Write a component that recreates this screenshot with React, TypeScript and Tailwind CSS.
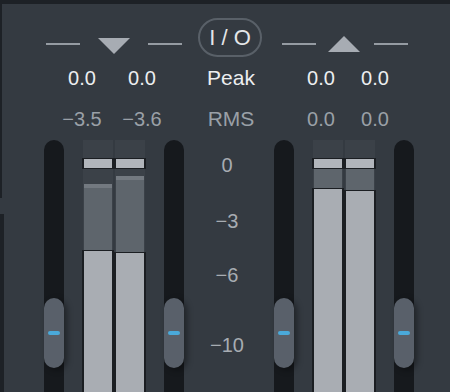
import React from "react";

interface Channel {
  rmsTop: number;
  levelTop: number;
  highlight: boolean;
}

const leftChannels: Channel[] = [
  { rmsTop: 44, levelTop: 110, highlight: true },
  { rmsTop: 36, levelTop: 112, highlight: true },
];

const rightChannels: Channel[] = [
  { rmsTop: 29, levelTop: 48, highlight: false },
  { rmsTop: 29, levelTop: 50, highlight: false },
];

function Track() {
  return (
    <div className="w-[20px] h-full rounded-t-full bg-[#16191d] flex flex-col">
      <div className="mt-[158px] h-[70px] w-[20px] rounded-full bg-[#59606a] shadow-[3px_2px_6px_rgba(0,0,0,0.4)] flex items-center justify-center">
        <div className="w-[12px] h-[4px] rounded-full bg-[#4aa9da]" />
      </div>
    </div>
  );
}

function MeterChannel({ ch }: { ch: Channel }) {
  return (
    <div className="relative w-[32px] h-full">
      <div className="mx-[1px] h-full bg-[#3b4148] flex flex-col">
        <div style={{ height: ch.rmsTop }} />
        <div
          className={
            ch.highlight
              ? "mx-[1px] bg-[#5e656c] border-t-4 border-[#737980]"
              : "mx-[1px] bg-[#5e656c]"
          }
          style={{ height: ch.levelTop - ch.rmsTop }}
        />
        <div className="-mx-[1px] flex-1 bg-[#a9adb3] border-x-2 border-t border-[#1b1e22]" />
      </div>
      {/* peak hold */}
      <div className="absolute top-[18px] inset-x-0 h-[11px] bg-[#b1b5bb] border-x-2 border-y border-[#1b1e22]" />
    </div>
  );
}

function Meter({ channels }: { channels: Channel[] }) {
  return (
    <div className="flex w-[64px] h-full">
      {channels.map((ch, i) => (
        <MeterChannel key={i} ch={ch} />
      ))}
    </div>
  );
}

function Line() {
  return <div className="mt-[25px] w-[34px] h-[2px] bg-[#959ba2]" />;
}

export default function App() {
  return (
    <div
      className="w-[450px] h-[392px] bg-[#343a41] overflow-hidden flex flex-col"
      style={{ fontFamily: '"Liberation Sans", Arial, sans-serif' }}
    >
      <div className="h-[4px] bg-[#1d2126]" />
      <div className="flex flex-1">
        {/* neighbouring panel edge */}
        <div className="w-[4px] flex flex-col">
          <div className="w-[2px] h-[194px] bg-[#1d2126]" />
          <div className="h-[16px]" />
          <div className="w-[4px] flex-1 bg-[#1d2126]" />
        </div>

        <div className="flex-1 flex flex-col">
          {/* header */}
          <div className="mt-[14px] h-[39px] flex items-start pl-[42px]">
            <Line />
            <svg className="ml-[18px] mt-[20px]" width="32" height="16" viewBox="0 0 32 16">
              <polygon points="0,0 32,0 16,16" fill="#a7acb3" />
            </svg>
            <div className="ml-[18px]">
              <Line />
            </div>
            <div className="ml-[16px] w-[64px] h-[39px] rounded-full border-2 border-[#596068] flex items-center justify-center text-[22px] leading-none text-[#e4e6e9]">
              I / O
            </div>
            <div className="ml-[20px]">
              <Line />
            </div>
            <svg className="ml-[12px] mt-[18px]" width="32" height="16" viewBox="0 0 32 16">
              <polygon points="16,0 32,16 0,16" fill="#a7acb3" />
            </svg>
            <div className="ml-[14px]">
              <Line />
            </div>
          </div>

          {/* peak row */}
          <div className="mt-[9px] flex pl-[48px] text-[20px] leading-[24px] text-[#eceef0]">
            <div className="w-[60px] text-center">0.0</div>
            <div className="w-[60px] text-center">0.0</div>
            <div className="w-[118px] text-center text-[21px]">Peak</div>
            <div className="w-[62px] text-center">0.0</div>
            <div className="w-[46px] text-center">0.0</div>
          </div>

          {/* rms row */}
          <div className="mt-[17px] flex pl-[48px] text-[20px] leading-[24px] text-[#9aa0a7]">
            <div className="w-[60px] text-center">−3.5</div>
            <div className="w-[60px] text-center">−3.6</div>
            <div className="w-[118px] text-center text-[21px]">RMS</div>
            <div className="w-[62px] text-center">0.0</div>
            <div className="w-[46px] text-center">0.0</div>
          </div>

          {/* meters */}
          <div className="mt-[9px] h-[252px] flex">
            <div className="ml-[40px]">
              <Track />
            </div>
            <div className="ml-[18px]">
              <Meter channels={leftChannels} />
            </div>
            <div className="ml-[18px]">
              <Track />
            </div>
            <div className="w-[90px] pr-[4px] flex flex-col items-center text-[20px] leading-[24px] text-[#a7acb2]">
              <div className="mt-[13px]">0</div>
              <div className="mt-[32px]">−3</div>
              <div className="mt-[30px]">−6</div>
              <div className="mt-[46px]">−10</div>
            </div>
            <Track />
            <div className="ml-[18px]">
              <Meter channels={rightChannels} />
            </div>
            <div className="ml-[18px]">
              <Track />
            </div>
          </div>
        </div>
      </div>
    </div>
  );
}
